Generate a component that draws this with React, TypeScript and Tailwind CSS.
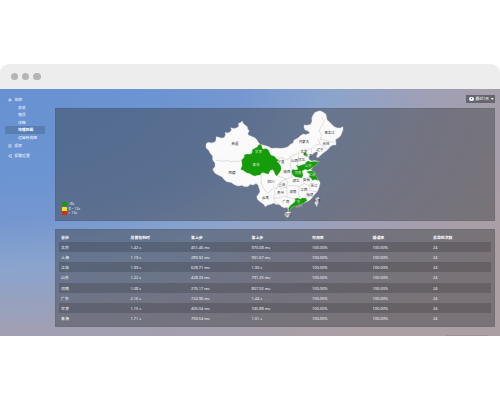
import React from "react";
import { Eye, FileText, Share2 } from "lucide-react";

const headers = ["省份", "总首包耗时", "第上步", "第上步", "可用率", "错误率", "总监控次数"];

const rows = [
  ["北京", "1.42 s", "451.46 ms", "970.08 ms", "100.00%", "100.00%", "24"],
  ["上海", "1.19 s", "289.92 ms", "901.67 ms", "100.00%", "100.00%", "24"],
  ["江苏", "1.93 s", "628.71 ms", "1.30 s", "100.00%", "100.00%", "24"],
  ["山东", "1.22 s", "428.33 ms", "791.25 ms", "100.00%", "100.00%", "24"],
  ["河南", "1.08 s", "276.17 ms", "807.92 ms", "100.00%", "100.00%", "24"],
  ["广东", "2.16 s", "724.96 ms", "1.44 s", "100.00%", "100.00%", "24"],
  ["甘肃", "1.15 s", "405.04 ms", "745.88 ms", "100.00%", "100.00%", "24"],
  ["青海", "1.71 s", "700.54 ms", "1.01 s", "100.00%", "100.00%", "24"],
];

const subItems = ["总览", "错误", "详细", "地理视图", "运营商视图"];

const legend = [
  { color: "bg-[#169c0b]", label: "<8s" },
  { color: "bg-[#f4e60c]", label: "8 ~ 12s" },
  { color: "bg-[#e02a0c]", label: "> 12s" },
];

const provinces: [string, number, number][] = [
  ["新疆", 235, 144], ["西藏", 232, 173], ["甘肃", 258.5, 152], ["青海", 256, 165],
  ["四川", 271, 182], ["云南", 265.5, 198], ["内蒙古", 304, 142], ["黑龙江", 329.5, 132.5],
  ["吉林", 326, 143.5], ["辽宁", 320, 149.5], ["河北", 301.5, 160], ["山西", 294.5, 161],
  ["宁夏", 281, 161.5], ["陕西", 287, 172], ["河南", 298, 173], ["山东", 308.5, 166],
  ["江苏", 312, 174.2], ["湖北", 296, 181], ["安徽", 306.5, 179.5], ["重庆", 282, 185],
  ["浙江", 314, 186], ["江西", 304, 190], ["湖南", 293, 191.5], ["贵州", 280.5, 192.5],
  ["福建", 310, 195], ["广西", 286, 202], ["广东", 297, 202], ["海南", 288, 214.3],
  ["台湾", 317, 201], ["北京", 304, 151.5], ["天津", 308.5, 156],
];

const mainland =
  "206,144 207,143 208.3,142.3 212,143 215,141.7 216,140 216,136.7 219,137.2 221,138 224,137.7 225.5,135 225,132.3 227,133 230,132 231.5,130 230.7,127.7 234,128.5 237,127.7 238.8,126 238.3,123.3 240,123 242.3,121 243,123 244,124.3 247.3,126.7 247.8,129 249.3,131 248,133 248.3,135 252,136.5 255,137.7 257,140 258.3,142.3 260.5,144.5 263,145 267,146 271.7,148.3 276,148 280,148.3 284,148 288,146.7 290,144.5 293,143 294,140 298,138 300,136 303,134 306,134.5 310,133 308,131 305,130 304,127.5 304,125 307,125.3 310.7,124.3 312,121 311.7,118 313,115 315,112.3 318,111.3 320,110.7 323,112 326,114.3 326.5,117 327.3,120 329.5,122 331.7,124.3 334,126.5 336.7,127.7 340,128 343,126.7 343,130 341.7,133.3 340.5,136 338,138.3 335.5,139.5 336,142 336,145 333,145 330,146.7 328,149.5 325,151.7 322,154 318,157.7 316.5,157 317,155 318,152.5 316,151.7 314,153 311.7,155 310,156.5 308.5,158 309.5,160 311.7,161 315,160.5 319.3,161.7 317,164 313,166.7 312,168.5 310.7,170 313,171.5 315,173.3 315.5,175.5 316.7,177.3 318,180 320,181.7 320,184 319.3,186.7 318.5,189 317.3,191.7 315,194 313,196.7 310,200 307,201.7 303.5,203 300,204.3 296.5,205.5 293,206.7 291,208 289.5,210.5 288,210 287.5,207.5 284,207.7 281.7,206.7 280,205 278,204.3 276,204.5 274,203 271.7,204 268,205 265,206.7 264,204.5 260,201.7 257.5,199.5 256.7,196.7 258.5,194 260,191.7 259,188 258,185 256,183.5 253.3,185 250,184.5 248,186.5 245,186.7 242,185.5 238,186 235,185 231,182.5 226.7,181.7 224,179.5 221.7,176.7 218,175 215,173.3 213.5,171 212.7,169.3 215,166.5 215,163.3 212.7,160 212.5,156 210,153 208.5,150 206,148";

const qinghaiGansu =
  "250,154.3 252,153.2 252.5,149.5 255,148.3 257.5,147 258,145.5 260,144.3 261.5,145.5 262,147.8 263.3,149.3 266,148.5 268.3,150 269.5,152.5 270.7,155 275,156.7 276.5,159 278.3,160 277,161.5 279,163.5 280.7,166 281.2,169 280,171.7 278,174.5 276.7,176 275,174 274.3,171.7 272.7,169.5 270,170.5 268.5,174 266,173.5 263,172.5 261.7,172.7 260,175 257,175.3 255,176 252,175 250,173.5 246.7,172.7 243.5,170.5 240.7,169.3 242.2,166 241.7,160 244.5,157 244,155.3 247,154";

const shandong =
  "291.7,171.7 292.5,169.5 295.5,170 298,169.5 297.5,167 296,165.3 299,166 301,165.2 305,164 306.5,161.7 308.5,161 310.5,162 314,161.5 319.3,161.7 317,164 313,166.7 311,168.5 308,170 305,169.3 302,171 302.5,173 303,175 301.7,178 298,177.3 295,176.7 292.5,174.5";

function ChinaMap() {
  return (
    <svg viewBox="200 108 150 113" className="ml-[145px] h-[113px] w-[150px]">
      <g stroke="#cfcfcf" strokeWidth=".4" strokeLinejoin="round">
        <polygon fill="#fafafa" points={mainland} />
        <polygon fill="#dedede" points="316,198.5 318,197 319.2,198 318.4,202 316.8,206.5 315,203.5 314.7,201" />
        <polygon fill="#fafafa" points="285,213 288,211.7 290.8,212.3 290.3,215 287.5,217.3 284.8,215.5" />
        <polygon fill="#8f9297" stroke="none" points="295,206 300,204.5 303,204 302,206.5 296,208" />
      </g>
      <g fill="#169c0b" stroke="#3fae35" strokeWidth=".25" strokeLinejoin="round">
        <polygon points={qinghaiGansu} />
        <polygon points={shandong} />
        <polygon points="306.7,171.7 310,171 312.5,171.3 315,173.3 316.7,177.3 318,180.3 315,179.6 312.5,180.3 311,178 309,176.3 310,174.3" />
        <polygon points="295,198.8 298,198 300,199.3 302.5,198 306,198.3 307,200.7 303.5,203 300,204.3 296.5,205.5 293,206.7 291,208 289.5,211 288.3,208.5 290,206 293,203.5 295,201.5" />
        <polygon points="303.4,153.8 305,152 306.6,153.2 306,155.2 304,155.5" />
      </g>
      <g fill="none" stroke="#b2b2b2" strokeWidth=".4" strokeLinejoin="round">
        <polyline points="216,161 219,160 223,161.3 227,160.5 231,161.7 235,161 239,161.5 242,160.3" />
        <polyline points="250,154.3 252.5,149.5 257.5,147" />
        <polyline points="322,117 324,122 321,127 319,131 322,135 320,139 325,140 331,142 336,142" />
        <polyline points="318,139 320,144 325,147.5 328,149.5" />
        <polyline points="311,149 316,145 320,144" />
        <polyline points="278,160 280,157.5 283,158 284,163 281,166.7" />
        <polyline points="283,158 287,160 291,156.5 296,154.5 301,150.5 306,149 311,149 312,154" />
        <polyline points="291,156.5 290,163 291.5,171.7 292,177 286,179 281,177 277.5,176" />
        <polyline points="299,153 298,160 298,166" />
        <polyline points="261.7,172.7 261,180 262,186 265,190 268,193 271,190 274,187.5 277,189 278,184.5 282,181 286,179" />
        <polyline points="278,184.5 281,188.5 286,187 287.5,182 286,179" />
        <polyline points="287.5,185.5 293,185.5 299,186.5 304,183.5 303,178.5" />
        <polyline points="304,183.5 309,185.5 312.5,180.3" />
        <polyline points="309,185.5 310,190 314,191.5 317,191.5" />
        <polyline points="310,190 306,194 306,198.3" />
        <polyline points="299,186.5 298.5,193 300,199" />
        <polyline points="274,189 275,194 273.5,198 279,198 284,196 287,197 287,190 285.5,187" />
        <polyline points="273.5,198 275,201 278,204.3" />
        <polyline points="287,197 292,198.5 295,198.8" />
      </g>
      <g fontSize="3.4" textAnchor="middle" className="font-['Noto_Sans_CJK_SC',sans-serif]">
        {provinces.map(([name, x, y]) => (
          <text
            key={name}
            x={x}
            y={y + 1.3}
            fill={["甘肃", "青海", "河南", "山东", "江苏", "广东"].includes(name) ? "#d8efd5" : "#333"}
          >
            {name}
          </text>
        ))}
      </g>
    </svg>
  );
}

function Sidebar() {
  return (
    <nav className="w-[55px] shrink-0 pt-[7px] text-[3.8px] leading-[7.5px] text-white">
      <div className="flex h-[7.5px] items-center gap-[2.5px] pl-2">
        <Eye size={4} strokeWidth={2.5} />
        监控
      </div>
      {subItems.map((item) => (
        <div
          key={item}
          className={`ml-[5px] h-[7.5px] w-10 pl-[13px] ${item === "地理视图" ? "bg-[#587eb2] font-bold" : ""}`}
        >
          {item}
        </div>
      ))}
      <div className="mt-[1px] flex h-[8px] items-center gap-[2.5px] pl-2">
        <FileText size={4} strokeWidth={2} />
        报表
      </div>
      <div className="mt-[2px] flex h-[7.5px] items-center gap-[2.5px] pl-2">
        <Share2 size={4} strokeWidth={2} />
        报警设置
      </div>
    </nav>
  );
}

export default function App() {
  return (
    <div className="h-[400px] w-[500px] overflow-hidden bg-white pt-16 font-['Open_Sans','Noto_Sans_CJK_SC',sans-serif]">
      <header className="flex h-[25px] items-center gap-[4px] rounded-t-[9px] bg-[#ededed] pl-[11px]">
        {[0, 1, 2].map((n) => (
          <span key={n} className="size-[7.2px] rounded-full bg-[#b5b5b5]" />
        ))}
      </header>
      <div className="relative flex h-[247px] bg-[radial-gradient(435px_240px_at_0_0,#6791d1_0%,#6b94d2_35%,#7597d0_55%,#8ba4cd_75%,#a09fb4_100%,#a59eab_114%,#ab9fa4_130%)]">
        <Sidebar />
        <main className="flex w-[440px] flex-col">
          <div className="flex h-[19px] justify-end pt-[6px]">
            <button className="flex h-[8px] w-[29px] items-center gap-[2px] bg-[#66666f] pl-[3px] text-[3.8px] leading-none text-white">
              <span className="flex size-[4.5px] shrink-0 items-start justify-center rounded-full bg-white">
                <span className="mt-[1px] h-[1.5px] w-[.7px] bg-[#555]" />
              </span>
              最近7天
              <span className="text-[2.5px]">▼</span>
            </button>
          </div>
          <section className="relative h-[113px] border border-black/5 bg-[#3c3e42]/45">
            <div className="-mt-px -ml-px">
              <ChinaMap />
            </div>
            <div className="absolute bottom-[5px] left-[5.5px] flex flex-col gap-[.5px]">
              {legend.map((l) => (
                <div key={l.label} className="flex h-[4px] items-center gap-[1.5px] text-[3.6px] leading-none text-white">
                  <span className={`h-[4px] w-[5.5px] rounded-[.5px] ${l.color}`} />
                  {l.label}
                </div>
              ))}
            </div>
          </section>
          <section className="mt-2 h-[98px] border border-black/5 bg-[#3c3e42]/45 px-[3px] pt-[2px] text-[3.9px] leading-[11.2px] text-white">
            <div className="grid h-[10.1px] grid-cols-[69.5px_60.5px_60.5px_60.5px_60.5px_60.5px_60px] pl-[2px] font-semibold">
              {headers.map((h, i) => (
                <span key={i}>{h}</span>
              ))}
            </div>
            {rows.map((row, r) => (
              <div
                key={r}
                className={`grid h-[10.12px] grid-cols-[69.5px_60.5px_60.5px_60.5px_60.5px_60.5px_60px] pl-[2px] ${r % 2 === 0 ? "bg-black/15" : ""}`}
              >
                {row.map((cell, i) => (
                  <span key={i}>{cell}</span>
                ))}
              </div>
            ))}
          </section>
        </main>
        <span className="absolute right-[12px] bottom-0 h-px w-[42px] bg-[#9c9195]" />
      </div>
    </div>
  );
}
